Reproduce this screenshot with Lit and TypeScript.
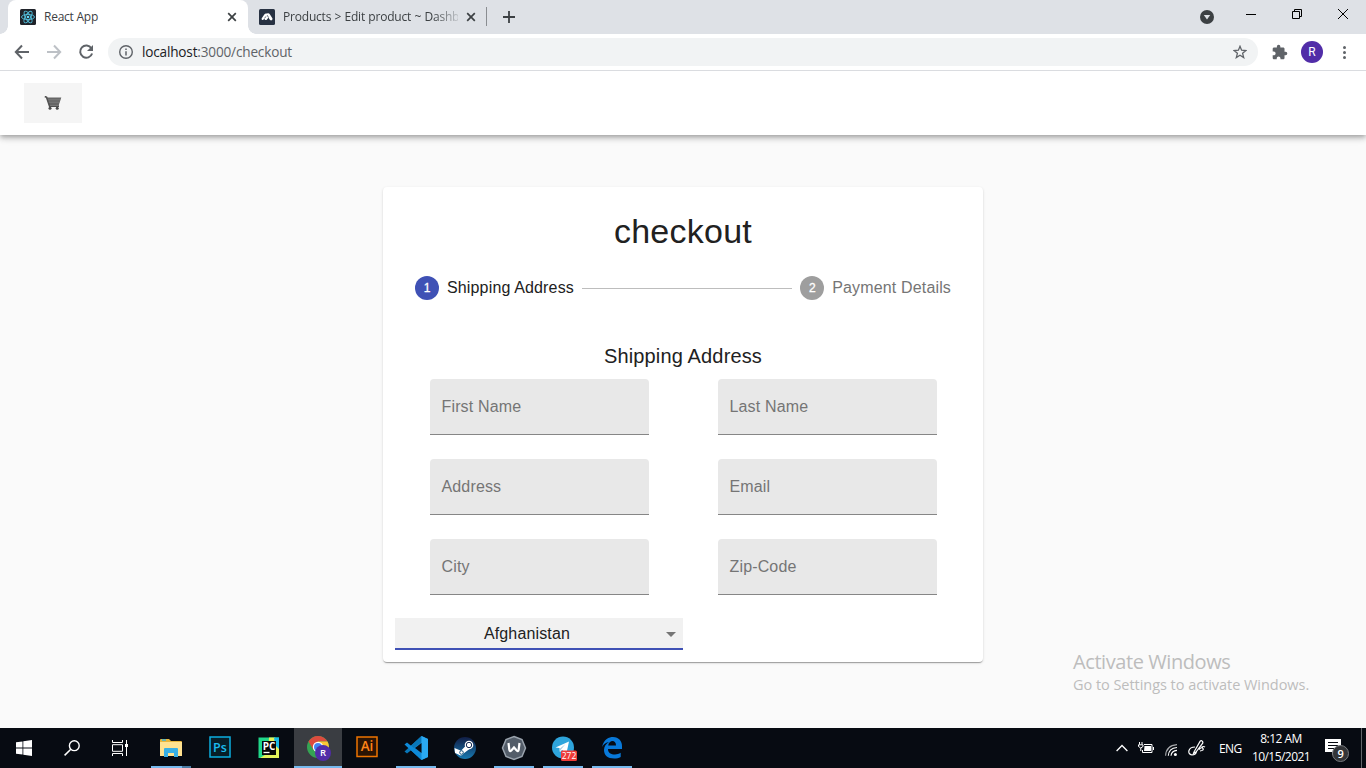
import { LitElement, html, css, svg } from "lit";
import { customElement, property } from "lit/decorators.js";

const icon = (w: number, h: number, body: unknown, box = `0 0 ${w} ${h}`) =>
  html`<svg width=${w} height=${h} viewBox=${box}>${body}</svg>`;

const closeIcon = icon(10, 10, svg`<path d="M1.2 1.2 8.8 8.8M8.8 1.2 1.2 8.8" stroke="#3c4043" stroke-width="1.7"/>`);

const reactIcon = icon(16, 16, svg`
  <rect width="16" height="16" rx="1.5" fill="#20232a"/>
  <g fill="none" stroke="#53c1de" stroke-width=".9">
    <ellipse cx="8" cy="8" rx="6.5" ry="2.6"/>
    <ellipse cx="8" cy="8" rx="6.5" ry="2.6" transform="rotate(60 8 8)"/>
    <ellipse cx="8" cy="8" rx="6.5" ry="2.6" transform="rotate(120 8 8)"/>
  </g><circle cx="8" cy="8" r="1.3" fill="#61dafb"/>`);

const commerceIcon = icon(16, 16, svg`
  <rect width="16" height="16" rx="1.5" fill="#273142"/>
  <path d="M2.600 9.600 5.300 5.400Q6.400 4 7.800 4.600 9.700 3.600 11 5.400l2.500 4.100q.3 1.800-1.300 1.900-1.300 0-1.900-1.400l-.8-1.500L8 10.400q-1 1.100-2.100.3-1-.8-.3-2l-.9 1.800q-1.200.9-2-.1z" fill="#fff"/>
  <path d="M8.200 6.200 9.500 8.500M6.900 7.400 5.700 9.200" stroke="#273142" stroke-width=".7"/>`);

@customElement("browser-chrome")
export class BrowserChrome extends LitElement {
  static styles = css`
    :host { display: block; font-family: "Open Sans", "Noto Sans", sans-serif; }
    svg { display: block; flex: none; }
    .tabs { display: flex; height: 34px; background: #dee1e6; padding-left: 8px; box-sizing: border-box; }
    .tab { display: flex; align-items: center; box-sizing: border-box; height: 34px; color: #3c4043; font-size: 12px; white-space: nowrap; }
    .active { width: 240px; padding: 0 11px 0 12px; background: #fff; border-radius: 8px 8px 0 0; }
    .foot { align-self: end; width: 8px; height: 8px; background: radial-gradient(circle at 100% 0, #dee1e6 7.5px, #fff 8px); }
    .foot.start { margin-left: -8px; background: radial-gradient(circle at 0 0, #dee1e6 7.5px, #fff 8px); }
    .idle { width: 231px; padding: 0 11px 0 3px; border-right: 1px solid #8a8d91; height: 19px; margin-top: 7px; }
    .title { flex: 1; margin-left: 8px; letter-spacing: -0.25px; line-height: 18px; }
    .idle .title { flex: none; width: 175px; letter-spacing: -0.2px; word-spacing: 0.4px; -webkit-mask-image: linear-gradient(90deg, #000 150px, transparent 180px); margin-right: 8px; }
    .plus { margin: 11px 0 0 16px; }
    .window { display: flex; margin-left: auto; }
    .menu { margin: 10px 32px 0 0; }
    .min { margin: 14px 36px 0 0; }
    .max { margin: 9px 36px 0 0; }
    .close { margin: 9px 18px 0 0; }
    .bar { display: flex; align-items: center; height: 36px; background: #fff; border-bottom: 1px solid #dadce0; padding: 0 14px; }
    .back, .fwd { margin-right: 16px; }
    .omni { display: flex; align-items: center; flex: 1; height: 28px; margin: 0 14px 0 14px; padding: 0 11px; border-radius: 14px; background: #f1f3f4; }
    .url { flex: 1; margin-left: 9px; font-size: 13.6px; color: #5f6368; letter-spacing: -0.18px; line-height: 20px; }
    .host { color: #202124; }
    .avatar { display: grid; place-items: center; width: 22px; height: 22px; margin: 0 13px 0 13px; border-radius: 50%; background: #512da8; color: #fff; font: 12px Roboto, sans-serif; }
  `;
  render() {
    return html`
      <div class="tabs">
        <div class="foot start"></div>
        <div class="tab active">${reactIcon}<span class="title">React App</span>${closeIcon}</div>
        <div class="foot"></div>
        <div class="tab idle">${commerceIcon}<span class="title">Products &gt; Edit product ~ Dashb</span>${closeIcon}</div>
        <div class="plus">${icon(12, 12, svg`<path d="M6 0V12M0 6H12" stroke="#3c4043" stroke-width="1.8"/>`)}</div>
        <div class="window">
          <div class="menu">${icon(14, 14, svg`<circle cx="7" cy="7" r="7" fill="#3c4043"/><path d="M3.8 5h6.4L7 9.6z" fill="#dee1e6"/>`)}</div>
          <div class="min">${icon(10, 1, svg`<path d="M0 .5H10" stroke="#000"/>`)}</div>
          <div class="max">${icon(10, 10, svg`<path d="M.5 2.5h7v7h-7zM2.5 2.5v-2h7v7h-2" fill="none" stroke="#000"/>`)}</div>
          <div class="close">${icon(10, 10, svg`<path d="M0 0 10 10M10 0 0 10" stroke="#000"/>`)}</div>
        </div>
      </div>
      <div class="bar">
        <div class="back">${icon(16, 16, svg`<path d="M15 8H2M8 1.5 1.8 8 8 14.5" fill="none" stroke="#5f6368" stroke-width="2"/>`)}</div>
        <div class="fwd">${icon(16, 16, svg`<path d="M1 8H14M8 1.5 14.2 8 8 14.5" fill="none" stroke="#bdc1c6" stroke-width="2"/>`)}</div>
        ${icon(16, 16, svg`<path d="M13.4 4.3A6.1 6.1 0 1 0 14.1 9.5" fill="none" stroke="#5f6368" stroke-width="2"/><path d="M15 1v6H9z" fill="#5f6368"/>`)}
        <div class="omni">
          ${icon(14, 14, svg`<circle cx="7" cy="7" r="6.3" fill="none" stroke="#5f6368" stroke-width="1.4"/><path d="M7 6.2V10.6M7 3.4V5" stroke="#5f6368" stroke-width="1.5"/>`)}
          <span class="url"><span class="host">localhost</span>:3000/checkout</span>
          ${icon(14, 14, svg`<path d="M7 1.3 8.6 5.2 12.9 5.5 9.6 8.3 10.7 12.6 7 10.2 3.3 12.6 4.4 8.3 1.1 5.5 5.4 5.2z" fill="none" stroke="#5f6368" stroke-width="1.3"/>`)}
        </div>
        ${icon(16, 16, svg`<path d="M20.5 11H19V7c0-1.1-.9-2-2-2h-4V3.5a2.5 2.5 0 0 0-5 0V5H4c-1.1 0-1.99.9-1.99 2v3.8H3.5c1.49 0 2.7 1.21 2.7 2.7s-1.21 2.7-2.7 2.7H2V20c0 1.1.9 2 2 2h3.8v-1.5c0-1.49 1.21-2.7 2.7-2.7s2.7 1.21 2.7 2.7V22H17c1.1 0 2-.9 2-2v-4h1.5a2.5 2.5 0 0 0 0-5z" fill="#5f6368"/>`, "1 0 23 23")}
        <div class="avatar">R</div>
        ${icon(16, 16, svg`<g fill="#5f6368"><circle cx="8.5" cy="3.5" r="1.5"/><circle cx="8.5" cy="8.5" r="1.5"/><circle cx="8.5" cy="13.5" r="1.5"/></g>`)}
      </div>`;
  }
}

@customElement("text-field")
export class TextField extends LitElement {
  @property() label = "";
  static styles = css`
    :host { display: flex; align-items: center; box-sizing: border-box; width: 219px; height: 56px; padding-left: 12px;
      background: #e8e8e8; border-bottom: 1px solid #868686; border-radius: 4px 4px 0 0; color: #757575; font-size: 16px; letter-spacing: 0.15px; }
  `;
  render() { return html`${this.label}`; }
}

@customElement("checkout-page")
export class CheckoutPage extends LitElement {
  static styles = css`
    :host { display: flex; flex-direction: column; background: #fafafa; font-family: "Liberation Sans", Arial, sans-serif; color: #212121; }
    .appbar { display: flex; align-items: center; box-sizing: border-box; height: 64px; flex: none; padding-left: 24px; background: #fff;
      box-shadow: 0 2px 4px -1px rgba(0,0,0,.2), 0 4px 5px rgba(0,0,0,.14), 0 1px 10px rgba(0,0,0,.12); }
    .cart { display: grid; place-items: center; width: 58px; height: 40px; background: #f5f5f5; }
    .content { display: flex; flex: 1; padding-top: 52px; justify-content: space-between; align-items: start; }
    .content::before, .side { content: ""; width: 383px; }
    .card { width: 600px; height: 475px; box-sizing: border-box; background: #fff; border-radius: 4px; padding: 23px 12px 12px;
      box-shadow: 0 2px 1px -1px rgba(0,0,0,.2), 0 1px 1px rgba(0,0,0,.14), 0 1px 3px rgba(0,0,0,.12); }
    h1 { margin: 0; height: 42px; line-height: 42px; font-size: 34px; font-weight: 400; letter-spacing: 0.25px; text-align: center; }
    .steps { display: flex; align-items: center; gap: 8px; margin: 24px 20px 0; height: 24px; font-size: 16px; letter-spacing: 0.15px; white-space: nowrap; }
    .num { display: grid; place-items: center; width: 24px; height: 24px; border-radius: 50%; background: #3f51b5; color: #fff; font-size: 12px; letter-spacing: 0; -webkit-text-stroke: 0.3px #fff; }
    .num.off { background: #9e9e9e; }
    .off-label { color: #757575; }
    .line { flex: 1; height: 1px; background: #bdbdbd; }
    h2 { margin: 40px 0 0; line-height: 32px; height: 32px; font-size: 20px; font-weight: 400; letter-spacing: 0.15px; text-align: center; }
    .grid { display: grid; grid-template-columns: 288px 288px; row-gap: 24px; justify-items: center; margin-top: 7px; }
    .select { display: flex; align-items: center; box-sizing: border-box; width: 288px; height: 32px; margin-top: 23px; padding: 2px 7px 0 0;
      background: #f1f1f1; border-bottom: 2px solid #3f51b5; font-size: 16px; }
    .value { flex: 1; text-align: center; padding-right: 7px; letter-spacing: 0.15px; }
    .side { display: flex; justify-content: end; padding-top: 462px; }
    .activate { width: 293px; font-family: "Open Sans", "Noto Sans", sans-serif; color: #bdbdbd; white-space: nowrap; }
    .big { font-size: 20px; line-height: 26px; letter-spacing: -0.42px; }
    .small { font-size: 14.5px; line-height: 20px; letter-spacing: -0.04px; }
    svg { display: block; }
  `;
  render() {
    const fields = ["First Name", "Last Name", "Address", "Email", "City", "Zip-Code"];
    return html`
      <div class="appbar"><div class="cart">${icon(18, 14, svg`
        <path d="M3 1.500H17.300L14.800 9H5.400z" fill="#666"/>
        <path d="M.8.5 2.600 1.300 5.600 10.200h9.400" fill="none" stroke="#505050" stroke-width="1.700"/>
        <path d="M4 3.800H16.500M4.800 6.200H15.500" stroke="#8c8c8c" stroke-width=".6"/>
        <circle cx="6" cy="12.200" r="1.500" fill="#484848"/><circle cx="13.200" cy="12.200" r="1.500" fill="#484848"/>`)}</div></div>
      <div class="content">
        <div class="card">
          <h1>checkout</h1>
          <div class="steps">
            <span class="num">1</span><span>Shipping Address</span><span class="line"></span>
            <span class="num off">2</span><span class="off-label">Payment Details</span>
          </div>
          <h2>Shipping Address</h2>
          <div class="grid">${fields.map((f) => html`<text-field .label=${f}></text-field>`)}</div>
          <div class="select"><span class="value">Afghanistan</span>${icon(10, 5, svg`<path d="M0 0H10L5 5z" fill="#757575"/>`)}</div>
        </div>
        <div class="side"><div class="activate"><div class="big">Activate Windows</div><div class="small">Go to Settings to activate Windows.</div></div></div>
      </div>`;
  }
}

const taskIcons: { art: unknown; state?: string }[] = [
  { state: "open multi", art: icon(24, 24, svg`<path d="M1 4q0-1 1-1h8l2 2h10q1 0 1 1v14H1z" fill="#e8b63c"/><path d="M1 6h22v14H1z" fill="#ffe290"/><path d="M3 4h4" stroke="#3bb4dd" stroke-width="1.5"/><path d="M5 21v-8q0-1 1-1h12q1 0 1 1v8h-4v-4H9v4z" fill="#39b0e5"/>`) },
  { art: icon(24, 24, svg`<rect x="2" y="1" width="20" height="20" fill="#071e27" stroke="#0caee0" stroke-width="1.5"/><text x="12" y="15.5" text-anchor="middle" font-size="12.5" font-weight="600" fill="#1bbdf0">Ps</text>`) },
  { art: icon(24, 24, svg`<path d="M1.5 1.5h20.5v20.5H1.5z" fill="#21d789"/><path d="M12 1.5h6l4 4v8V22H3l8-5z" fill="#e5f35a"/><path d="M17 1.5h5V13l-4-4z" fill="#17b9e8"/><rect x="5" y="5" width="14" height="14" fill="#080808"/><text x="12" y="13.5" text-anchor="middle" font-size="10" font-weight="700" fill="#fff">PC</text><path d="M6.5 16.5h6" stroke="#fff" stroke-width="1.3"/>`) },
  { state: "open current", art: icon(26, 26, svg`<circle cx="13" cy="12" r="11" fill="#35a353"/><path d="M13 12 3.5 6.5A11 11 0 0 1 22.500 6.500H13z" fill="#dc4b3e"/><path d="M3.500 6.500 8.500 15 13 12 10 6z" fill="#dc4b3e"/><path d="M13 6.500H22.500A11 11 0 0 1 13 23L18 15z" fill="#fbc735"/><circle cx="13" cy="12" r="5.200" fill="#fff"/><circle cx="13" cy="12" r="4" fill="#4285f4"/><circle cx="18" cy="18" r="8" fill="#512da8"/><text x="18" y="21.300" text-anchor="middle" font-size="9.500" font-weight="600" fill="#fff">R</text>`) },
  { art: icon(24, 24, svg`<rect x="2" y="1" width="20" height="19.500" fill="#2b1404" stroke="#ee7400" stroke-width="1.500"/><text x="12" y="15" text-anchor="middle" font-size="13.500" font-weight="600" fill="#ff8417">Ai</text>`) },
  { state: "open", art: icon(26, 26, svg`<path d="M18.500 1 25 4v18l-6.500 3-13-12z" fill="#1687d0"/><path d="M18.500 7 4 18.500 1.500 16.500 18.500 1z" fill="#0877b9"/><path d="M18.500 19 4 7.500 1.500 9.500 18.500 25z" fill="#0e8ad8"/><path d="M18.500 1 25 4v18l-6.500 3z" fill="#2aa9f2"/><path d="M18.500 8v10L12 13z" fill="#070b12"/>`) },
  { art: icon(24, 24, svg`<defs><linearGradient id="st" x2="0" y2="1"><stop stop-color="#111d45"/><stop offset="1" stop-color="#1779b0"/></linearGradient></defs><circle cx="12" cy="12" r="11" fill="url(#st)"/><path d="M1.500 12 8 14.800l5-5.300 3.500 3.500-6 4.500q-2 3.500-5 1L2 17z" fill="#fff"/><circle cx="16" cy="9" r="4.300" fill="#fff"/><circle cx="16" cy="9" r="2.700" fill="none" stroke="#142a52"/><circle cx="8.500" cy="16.500" r="1.800" fill="none" stroke="#17547d"/>`) },
  { state: "open", art: icon(26, 26, svg`<path d="M13 1.500 21 4.500 24.500 13 21 21.500 13 24.500 5 21.500 1.500 13 5 4.500z" fill="#535d69" stroke="#9aa3ad" stroke-width="1.500"/><path d="M7.500 8 8.300 14.500Q8.700 17 10.300 15.500L13 12.500 15.700 15.500Q17.300 17 17.700 14.500L18.500 8" fill="none" stroke="#fff" stroke-width="2.200"/>`) },
  { state: "open", art: icon(28, 26, svg`<circle cx="14" cy="12.500" r="11" fill="#2ea5dc"/><path d="M6.500 12.500 20 6.500 17.500 18 13 15l-2 2-.5-4z" fill="#fff"/><path d="m10.500 14 6-5-4.500 5.500-1.500 2.500z" fill="#a6cce0"/><rect x="12" y="15.500" width="16" height="10.500" rx="1.500" fill="#ee3c38"/><text x="20" y="24" text-anchor="middle" font-size="8.500" fill="#fff">272</text>`) },
  { state: "open", art: icon(24, 24, svg`<path d="M2 11C4 3 9 1 13 1c6 0 9 4.500 9 9v3H8c0 4 3 5.500 7 5.500 2 0 4-.6 5.700-1.700V21c-2 1.200-4 1.500-6.500 1.500C7.500 22.500 4 19 4 14c0-3.500 2-6.500 5-8-4 .5-6 3-7 5zm6.200-1.500H16C16 6.500 14.500 5 12.500 5S8.700 6.500 8.200 9.500z" fill="#0879d9"/>`) },
];

@customElement("task-bar")
export class TaskBar extends LitElement {
  static styles = css`
    :host { display: flex; height: 40px; background: #070b12; color: #fff; font-family: "Open Sans", "Noto Sans", sans-serif; }
    svg { display: block; font-family: "Open Sans", "Noto Sans", sans-serif; }
    .item { display: grid; place-items: center; width: 48px; height: 40px; box-sizing: border-box; }
    .apps { display: flex; gap: 1px; margin-left: 3px; }
    .open { background: linear-gradient(#76b9ed, #76b9ed) 4px 38px / 40px 2px no-repeat; }
    .multi { background: linear-gradient(90deg, #76b9ed 31px, #4a7ba3 31px) 4px 38px / 40px 2px no-repeat; }
    .current { background: linear-gradient(#3a3d42 38px, #76b9ed 38px); }
    .tray { display: flex; align-items: center; margin-left: auto; font-size: 12px; letter-spacing: -0.35px; }
    .lang { width: 25px; margin-left: 13px; letter-spacing: -0.6px; }
    .clock { width: 66px; margin-left: 4px; text-align: center; line-height: 18px; white-space: nowrap; letter-spacing: -0.55px; }
    .pen { margin-left: 11px; }
    .battery { margin-left: 10px; }
    .wifi { margin-left: 11px; padding-top: 3px; }
    .note { margin-left: 10px; }
    .edge { width: 1px; height: 40px; margin: 0 4px 0 11px; background: #62656a; }
  `;
  render() {
    return html`
      <div class="item">${icon(16, 16, svg`<path d="M0 2.300 6.500 1.400V7.500H0zM7.300 1.200 16 0V7.500H7.300zM0 8.400H6.500V14.600L0 13.700zM7.300 8.400H16V16L7.300 14.800z" fill="#fff"/>`)}</div>
      <div class="item">${icon(16, 16, svg`<circle cx="10.300" cy="5.700" r="4.900" fill="none" stroke="#fff" stroke-width="1.400"/><path d="M6.800 9.200.6 15.400" stroke="#fff" stroke-width="1.500"/>`)}</div>
      <div class="item">${icon(16, 16, svg`<path d="M.5 0v2.500h10V0M.5 16v-2.500h10V16M.5 4.700h10v6.600H.5zM14.500 0v16" fill="none" stroke="#fff"/><path d="M13 4h3v3h-3z" fill="#fff"/>`)}</div>
      <div class="apps">${taskIcons.map((t) => html`<div class="item ${t.state ?? ""}">${t.art}</div>`)}</div>
      <div class="tray">
        ${icon(12, 8, svg`<path d="M.6 7 6 1.500 11.400 7" fill="none" stroke="#fff" stroke-width="1.300"/>`)}
        <div class="battery">${icon(16, 12, svg`<path d="M6 2.500h8v8H4.500V8M15.500 5v3" fill="none" stroke="#fff"/><path d="M6.500 4H13v5H6z" fill="#fff"/><path d="M1.500 0v2.500M4 0v2.500M.5 2.800h4.500v1.700q-2.200 3-4.500 0zM2.800 6v3" fill="none" stroke="#fff"/>`)}</div>
        <div class="wifi">${icon(12, 12, svg`<g fill="none" stroke="#fff" stroke-width="1.100"><path d="M.6 11.800Q1 1.500 12 .6" opacity=".65"/><path d="M3.300 11.800Q3.700 4.200 12 3.500"/><path d="M6 11.800Q6.400 6.900 12 6.400"/></g><circle cx="10.400" cy="10.400" r="1.500" fill="#fff"/>`)}</div>
        <div class="pen">${icon(18, 16, svg`<path d="M6 12 12.200 1.200q1-1 2 0t.5 2L8 12l-2.500 1.500zM7 7Q2 7 1 10.500T4 15q4 0 4.500-3.500M11 9.500q3-3 4-1t-3 2.500M13.500 7q2-1 3.500 0" fill="none" stroke="#fff" stroke-width="1.200"/>`)}</div>
        <span class="lang">ENG</span>
        <div class="clock">8:12 AM<br>10/15/2021</div>
        <div class="note">${icon(26, 28, svg`<path d="M1 5h16v13h-6l-3 3v-3H1z" fill="#fff"/><path d="M4 8.500h10M4 11.500h10M4 14.500h6" stroke="#070b12"/><circle cx="16.500" cy="19.500" r="8" fill="#333538" stroke="#777a7e"/><text x="16.500" y="23.500" text-anchor="middle" font-size="11" font-weight="600" fill="#fff">9</text>`)}</div>
        <div class="edge"></div>
      </div>`;
  }
}

@customElement("app-root")
export class AppRoot extends LitElement {
  static styles = css`
    :host { display: flex; flex-direction: column; width: 1366px; height: 768px; overflow: hidden; }
    checkout-page { flex: 1; min-height: 0; overflow: hidden; }
  `;
  render() {
    return html`<browser-chrome></browser-chrome><checkout-page></checkout-page><task-bar></task-bar>`;
  }
}
